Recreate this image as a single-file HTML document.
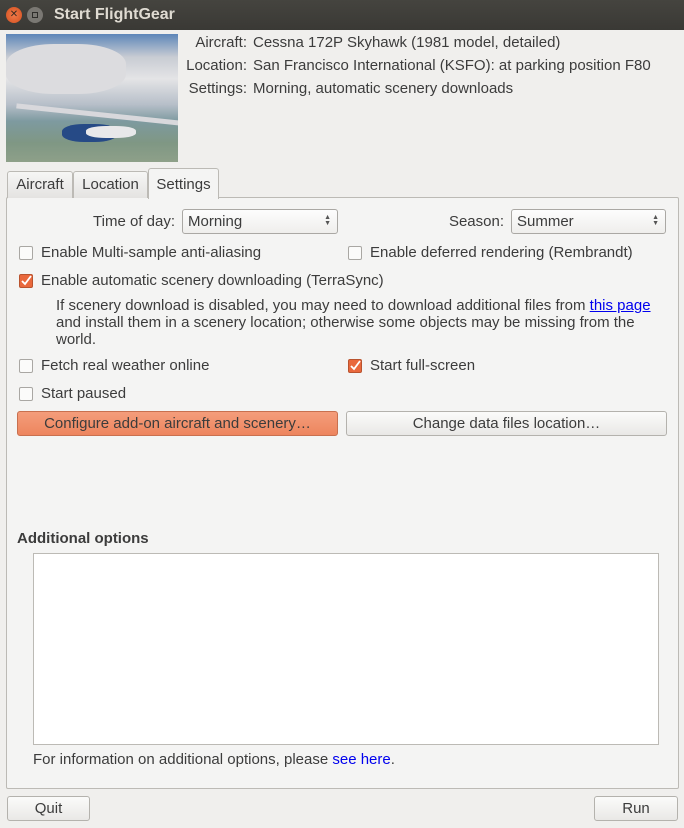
<!DOCTYPE html>
<html><head><style>
*{box-sizing:border-box;margin:0;padding:0}
body{width:684px;height:828px;background:#f0efed;font-family:"Liberation Sans",sans-serif;font-size:15px;color:#3c3c3c;position:relative;overflow:hidden}
.a{position:absolute;white-space:nowrap}
.tb{position:absolute;left:0;top:0;width:684px;height:30px;background:linear-gradient(#45443f,#3a3935);}
.btn{position:absolute;border:1px solid #b4b2ad;border-radius:3px;background:linear-gradient(#fbfbfa,#e9e8e6);text-align:center;line-height:23px}
.cb{position:absolute;width:14px;height:14px;border:1px solid #a9a7a3;border-radius:2px;background:#fbfbfa}
.cb.on{background:#e9683c;border-color:#b9532e}
.combo{position:absolute;border:1px solid #aaa8a4;border-radius:3px;background:linear-gradient(#fdfdfd,#efeeec);height:25px;line-height:23px;padding-left:5px}
.arr{position:absolute;right:6px;top:5px;font-size:7px;line-height:6px;color:#555}
.r{position:absolute;right:437px;text-align:right;white-space:nowrap}
</style></head><body>
<div class="tb"></div>
<div class="a" style="left:6px;top:7px;width:16px;height:16px;border-radius:50%;background:radial-gradient(#f07a4a,#d4501f);color:#3a2a20;font-size:10px;line-height:16px;text-align:center">✕</div>
<div class="a" style="left:27px;top:7px;width:16px;height:16px;border-radius:50%;background:#7a7873"><div style="position:absolute;left:5px;top:5px;width:6px;height:6px;border:1px solid #2e2d2a"></div></div>
<div class="a" style="left:54px;top:6px;color:#dfdbd2;font-weight:bold;font-size:16px">Start FlightGear</div>

<div class="a" style="left:6px;top:34px;width:172px;height:128px;background:linear-gradient(180deg,#5d86b8 0%,#c8ccd3 18%,#e4e4e6 35%,#b7bfc9 55%,#7e9aa0 68%,#7f9784 85%,#8ea089 100%);overflow:hidden">
<div style="position:absolute;left:0;top:10px;width:120px;height:50px;border-radius:40%;background:#dcdcdf"></div>
<div style="position:absolute;left:10px;top:78px;width:165px;height:5px;background:#d8d8dc;transform:rotate(6deg)"></div>
<div style="position:absolute;left:56px;top:90px;width:55px;height:18px;border-radius:40%;background:#264a86"></div>
<div style="position:absolute;left:80px;top:92px;width:50px;height:12px;border-radius:40%;background:#e8e8ea"></div>
</div>
<div class="r" style="top:34px">Aircraft:</div>
<div class="r" style="top:57px">Location:</div>
<div class="r" style="top:80px">Settings:</div>
<div class="a" style="left:253px;top:34px">Cessna 172P Skyhawk (1981 model, detailed)</div>
<div class="a" style="left:253px;top:57px">San Francisco International (KSFO): at parking position F80</div>
<div class="a" style="left:253px;top:80px">Morning, automatic scenery downloads</div>

<div class="a" style="left:6px;top:197px;width:673px;height:592px;border:1px solid #bcbab5;border-radius:2px;background:#f4f4f3"></div>
<div class="a" style="left:7px;top:171px;width:66px;height:27px;border:1px solid #bcbab5;border-bottom:none;border-radius:3px 3px 0 0;background:linear-gradient(#f6f6f5,#e4e3e1);text-align:center;line-height:26px">Aircraft</div>
<div class="a" style="left:73px;top:171px;width:75px;height:27px;border:1px solid #bcbab5;border-bottom:none;border-radius:3px 3px 0 0;background:linear-gradient(#f6f6f5,#e4e3e1);text-align:center;line-height:26px">Location</div>
<div class="a" style="left:148px;top:168px;width:71px;height:31px;border:1px solid #bcbab5;border-bottom:none;border-radius:3px 3px 0 0;background:#f4f4f3;text-align:center;line-height:31px">Settings</div>

<div class="a" style="right:509px;top:213px">Time of day:</div>
<div class="combo" style="left:182px;top:209px;width:156px">Morning<div class="arr">▲<br>▼</div></div>
<div class="a" style="right:180px;top:213px">Season:</div>
<div class="combo" style="left:511px;top:209px;width:155px">Summer<div class="arr">▲<br>▼</div></div>

<div class="cb" style="left:19px;top:246px"></div><div class="a" style="left:41px;top:244px">Enable Multi-sample anti-aliasing</div>
<div class="cb" style="left:348px;top:246px"></div><div class="a" style="left:370px;top:244px">Enable deferred rendering (Rembrandt)</div>
<div class="cb on" style="left:19px;top:274px"><svg width="12" height="12" style="position:absolute;left:0;top:0"><path d="M2 6l3 3 6-8" stroke="#fff" stroke-width="1.8" fill="none"/></svg></div><div class="a" style="left:41px;top:272px">Enable automatic scenery downloading (TerraSync)</div>
<div class="a" style="left:56px;top:297px;line-height:17px">If scenery download is disabled, you may need to download additional files from <span style="color:#0000ee;text-decoration:underline">this page</span><br>and install them in a scenery location; otherwise some objects may be missing from the<br>world.</div>
<div class="cb" style="left:19px;top:359px"></div><div class="a" style="left:41px;top:357px">Fetch real weather online</div>
<div class="cb on" style="left:348px;top:359px"><svg width="12" height="12" style="position:absolute;left:0;top:0"><path d="M2 6l3 3 6-8" stroke="#fff" stroke-width="1.8" fill="none"/></svg></div><div class="a" style="left:370px;top:357px">Start full-screen</div>
<div class="cb" style="left:19px;top:387px"></div><div class="a" style="left:41px;top:385px">Start paused</div>

<div class="btn" style="left:17px;top:411px;width:321px;height:25px;background:linear-gradient(#f49d7b,#ed855e);border-color:#c8704f">Configure add-on aircraft and scenery…</div>
<div class="btn" style="left:346px;top:411px;width:321px;height:25px">Change data files location…</div>

<div class="a" style="left:17px;top:530px;font-weight:bold">Additional options</div>
<div class="a" style="left:33px;top:553px;width:626px;height:192px;background:#fff;border:1px solid #bcbab5"></div>
<div class="a" style="left:33px;top:751px">For information on additional options, please <span style="color:#0000ee">see here</span>.</div>

<div class="btn" style="left:7px;top:796px;width:83px;height:25px">Quit</div>
<div class="btn" style="left:594px;top:796px;width:84px;height:25px">Run</div>
</body></html>
